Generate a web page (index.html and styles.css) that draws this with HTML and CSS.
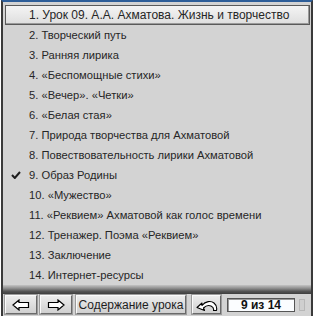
FILE: index.html
```html
<!DOCTYPE html>
<html lang="ru">
<head>
  <meta charset="UTF-8">
  <title>Содержание урока</title>
  <link rel="stylesheet" href="styles.css">
</head>
<body>
  <div class="window">
    <ul class="menu">
      <li class="item current">1. Урок 09. А.А. Ахматова. Жизнь и творчество</li>
      <li class="item">2. Творческий путь</li>
      <li class="item">3. Ранняя лирика</li>
      <li class="item">4. «Беспомощные стихи»</li>
      <li class="item">5. «Вечер». «Четки»</li>
      <li class="item">6. «Белая стая»</li>
      <li class="item">7. Природа творчества для Ахматовой</li>
      <li class="item">8. Повествовательность лирики Ахматовой</li>
      <li class="item checked">
        <svg class="tick" width="10" height="8" viewBox="0 0 10 8"><path d="M1,4 L3.8,7 L9,1" fill="none" stroke="#1e1e1e" stroke-width="2"/></svg>
        9. Образ Родины
      </li>
      <li class="item">10. «Мужество»</li>
      <li class="item">11. «Реквием» Ахматовой как голос времени</li>
      <li class="item">12. Тренажер. Поэма «Реквием»</li>
      <li class="item">13. Заключение</li>
      <li class="item">14. Интернет-ресурсы</li>
    </ul>
    <div class="divider"></div>
    <div class="toolbar">
      <button class="btn arrow" aria-label="Назад">
        <svg width="18" height="12" viewBox="0 0 18 12"><polygon points="1,6 7,1 7,3.5 16.5,3.5 16.5,8.5 7,8.5 7,11" fill="#fff" stroke="#000" stroke-width="1.2" stroke-linejoin="miter"/></svg>
      </button>
      <button class="btn arrow" aria-label="Вперёд">
        <svg width="18" height="12" viewBox="0 0 18 12"><polygon points="17,6 11,1 11,3.5 1.5,3.5 1.5,8.5 11,8.5 11,11" fill="#fff" stroke="#000" stroke-width="1.2" stroke-linejoin="miter"/></svg>
      </button>
      <button class="btn contents">Содержание урока</button>
      <button class="btn back" aria-label="Вернуться">
        <svg width="22" height="14" viewBox="0 0 22 14"><path d="M1,9.5 L6,5 L6,7.5 C9.5,3 15,2.5 18,5 C20.5,7 21,10 20.5,12.5 L17.5,12.5 C18,10.5 17,9 15,8 C12.5,7 9.5,8 7.5,10 L8.5,12.5 Z" fill="#fff" stroke="#000" stroke-width="1.1" stroke-linejoin="round"/></svg>
      </button>
      <div class="counter">9 из 14</div>
      <div class="grip"></div>
    </div>
  </div>
</body>
</html>
```

FILE: styles.css
```css
body {
  margin: 0;
  background: #fff;
  font-family: 'Liberation Sans', Arial, sans-serif;
}

.window {
  margin-left: 1px;
  width: 308px;
  height: 314px;
  background: #d3d3d3;
  border-top: 2px solid #2d5d98;
  border-left: 2px solid #3a3a3a;
  border-right: 2px solid #3a3a3a;
  display: flex;
  flex-direction: column;
}

.menu {
  list-style: none;
  margin: 3px 0 0 0;
  padding: 0 1px 0 2px;
}

.item {
  position: relative;
  height: 20px;
  line-height: 20px;
  padding-left: 24px;
  font-size: 11.2px;
  color: #262626;
  white-space: nowrap;
  box-sizing: border-box;
}

.item.current {
  font-size: 12px;
  background: linear-gradient(#f4f4f4, #dedede);
  border: 1px solid #5a5a5a;
  box-shadow: inset -1px -1px 0 #9a9a9a;
  line-height: 18px;
  padding-left: 23px;
}

.tick {
  position: absolute;
  left: 6px;
  top: 6px;
}

.divider {
  margin-top: auto;
  height: 9px;
  background: linear-gradient(#c4c4c4, #8a8a8a 40%, #555 70%, #3e3e3e);
}

.toolbar {
  height: 23px;
  display: flex;
  align-items: center;
  gap: 3px;
  padding: 0 0 0 2px;
}

.btn {
  height: 19px;
  margin: 0;
  padding: 0;
  background: linear-gradient(#ececec, #d0d0d0);
  border: 1px solid;
  border-color: #fafafa #6a6a6a #6a6a6a #fafafa;
  box-shadow: 0 0 0 1px #9c9c9c;
  display: flex;
  align-items: center;
  justify-content: center;
  font-family: 'Liberation Sans', Arial, sans-serif;
  font-size: 12px;
  color: #1e1e1e;
}

.arrow {
  width: 32px;
}

.contents {
  width: 110px;
  margin-left: 1px;
}

.back {
  width: 29px;
  margin-left: 3px;
}

.counter {
  width: 66px;
  height: 12px;
  margin-left: 3px;
  background: #fbfdff;
  border: 1px solid #555;
  box-shadow: inset 1px 1px 0 #999;
  font-size: 12px;
  font-weight: bold;
  line-height: 12px;
  text-align: center;
  color: #111;
}

.grip {
  width: 4px;
  height: 10px;
  margin-left: 1px;
  border: 1px solid #b8b8b8;
  background: #cfcfcf;
}
```
